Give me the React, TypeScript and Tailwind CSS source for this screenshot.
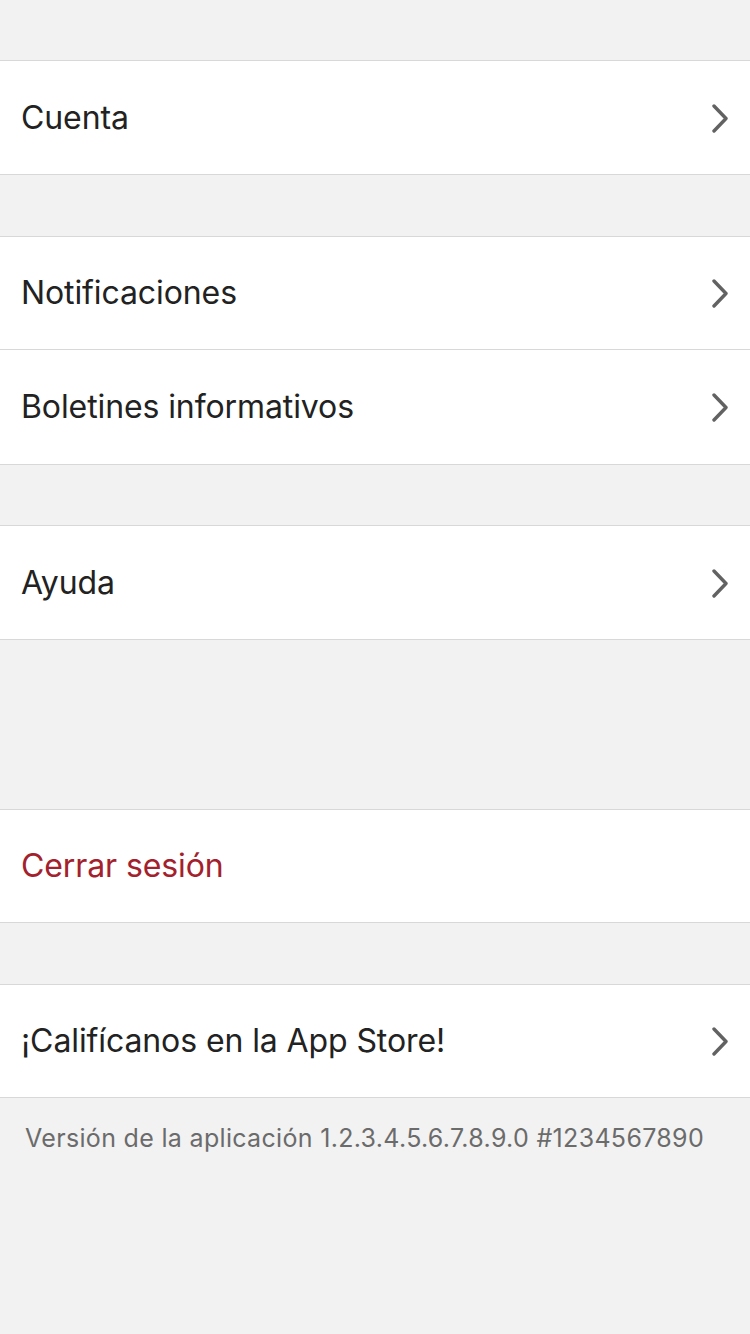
import React from "react";

function Chevron() {
  return (
    <svg width="20" height="30" viewBox="0 0 20 30" className="shrink-0">
      <path d="M4 3 L16 15.5 L4 28" fill="none" stroke="#626262" strokeWidth="3.4" strokeLinecap="round" strokeLinejoin="round" />
    </svg>
  );
}

function Row({ label, red, chevron = true, h, border }: { label: string; red?: boolean; chevron?: boolean; h: string; border?: boolean }) {
  return (
    <div className={`${h} flex items-center justify-between pl-[21px] pr-[20px] bg-white ${border ? "border-b border-[#d8d8d8]" : ""}`}>
      <span className={`text-[32px] leading-none tracking-[-0.1px] ${red ? "text-[#a3212c]" : "text-[#222222]"}`}>{label}</span>
      {chevron && <Chevron />}
    </div>
  );
}

function Group({ children }: { children: React.ReactNode }) {
  return <div className="border-t border-b border-[#d8d8d8] bg-white">{children}</div>;
}

export default function App() {
  return (
    <div className="w-[750px] h-[1334px] bg-[#f2f2f2] flex flex-col" style={{ fontFamily: "Inter, 'Noto Sans', sans-serif" }}>
      <div className="h-[60px] shrink-0" />
      <Group>
        <Row label="Cuenta" h="h-[113px]" />
      </Group>
      <div className="h-[61px] shrink-0" />
      <Group>
        <Row label="Notificaciones" h="h-[113px]" border />
        <Row label="Boletines informativos" h="h-[114px]" />
      </Group>
      <div className="h-[60px] shrink-0" />
      <Group>
        <Row label="Ayuda" h="h-[113px]" />
      </Group>
      <div className="h-[169px] shrink-0" />
      <Group>
        <Row label="Cerrar sesión" red chevron={false} h="h-[112px]" />
      </Group>
      <div className="h-[61px] shrink-0" />
      <Group>
        <Row label="¡Califícanos en la App Store!" h="h-[112px]" />
      </Group>
      <div className="pl-[25px] pt-[28px] text-[25px] leading-none text-[#6b6b6b] tracking-[0.32px]">
        Versión de la aplicación 1.2.3.4.5.6.7.8.9.0 #1234567890
      </div>
    </div>
  );
}
